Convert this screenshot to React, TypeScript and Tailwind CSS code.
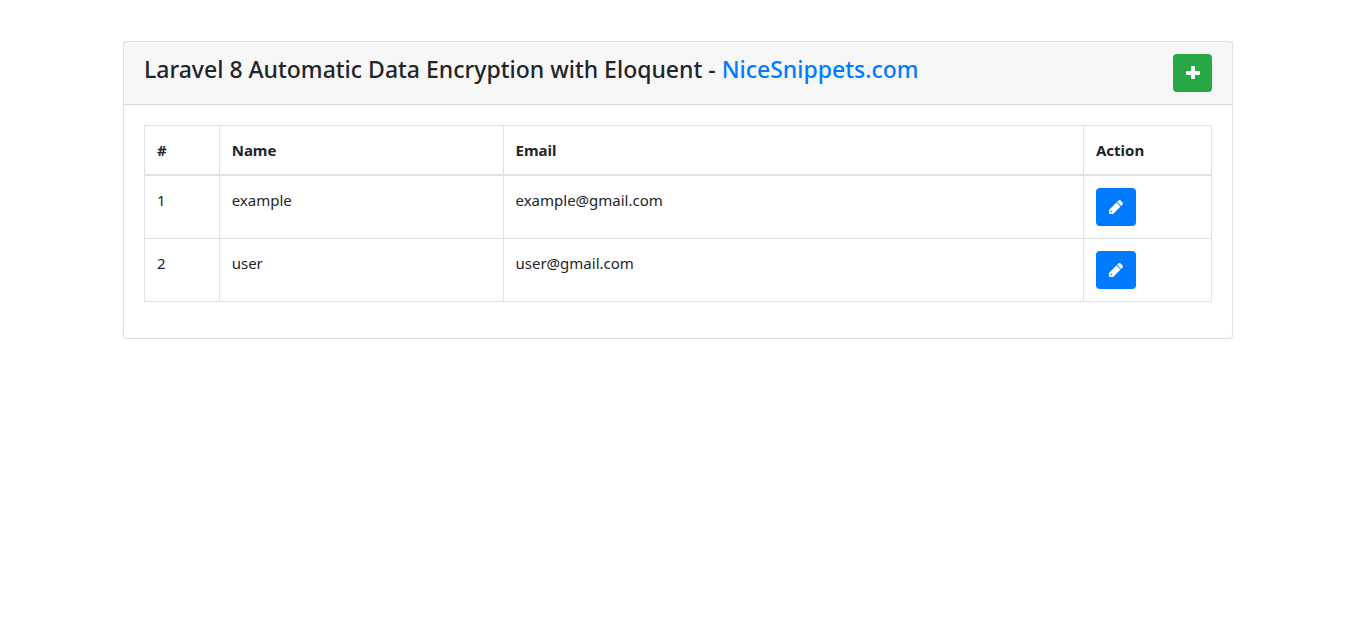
import React from "react";

const users = [
  { id: 1, name: "example", email: "example@gmail.com" },
  { id: 2, name: "user", email: "user@gmail.com" },
];

function PencilIcon() {
  return (
    <svg viewBox="0 0 1536 1536" className="h-[14px] w-[14px]" fill="currentColor" aria-hidden="true">
      <path d="M320 1340l65-65-160-160-65 65v65h95v95h65zM814 270l452 452-814 814H0v-452zM1536 384q0 53-37 90l-166 182-453-453 187-165q36-38 90-38 53 0 91 38l251 256q37 39 37 90z" />
    </svg>
  );
}

function PlusIcon() {
  return (
    <svg viewBox="0 0 14 14" className="h-[14px] w-[14px]" fill="currentColor" aria-hidden="true">
      <path d="M6 0h2q1 0 1 1v4h4q1 0 1 1v2q0 1-1 1H9v3q0 1-1 1H6q-1 0-1-1V9H1q-1 0-1-1V6q0-1 1-1h4V1q0-1 1-1z" />
    </svg>
  );
}

const cell = "border border-[#dee2e6] p-3 text-left align-top";

export default function App() {
  return (
    <div className="pt-[41px] pr-1">
      <main className="mx-auto max-w-[1140px] px-[15px] font-['Noto_Sans',sans-serif] text-[15px] leading-6 text-[#212529]">
        <section className="rounded border border-black/[.125] bg-white">
          <header className="flex items-start justify-between border-b border-black/[.125] bg-black/[.03] px-5 py-3">
            <h1 className="text-[23px] leading-[30px] font-medium">
              Laravel 8 Automatic Data Encryption with Eloquent -{" "}
              <a href="#" className="text-[#007bff]">NiceSnippets.com</a>
            </h1>
            <button type="button" aria-label="Add user" className="flex h-[38px] w-[39px] items-center justify-center rounded bg-[#28a745] text-white">
              <PlusIcon />
            </button>
          </header>
          <div className="px-5 pt-5 pb-9">
            <table className="w-full table-fixed border-collapse">
              <colgroup>
                <col className="w-[7%]" />
                <col className="w-[26.6%]" />
                <col />
                <col className="w-[12%]" />
              </colgroup>
              <thead>
                <tr>
                  {["#", "Name", "Email", "Action"].map((label) => (
                    <th key={label} scope="col" className="border border-b-2 border-[#dee2e6] p-3 text-left font-bold">{label}</th>
                  ))}
                </tr>
              </thead>
              <tbody>
                {users.map((user) => (
                  <tr key={user.id}>
                    <td className={cell}>{user.id}</td>
                    <td className={cell}>{user.name}</td>
                    <td className={cell}>{user.email}</td>
                    <td className={cell}>
                      <button type="button" aria-label={`Edit ${user.name}`} className="flex h-[38px] w-10 items-center justify-center rounded bg-[#007bff] text-white">
                        <PencilIcon />
                      </button>
                    </td>
                  </tr>
                ))}
              </tbody>
            </table>
          </div>
        </section>
      </main>
    </div>
  );
}
